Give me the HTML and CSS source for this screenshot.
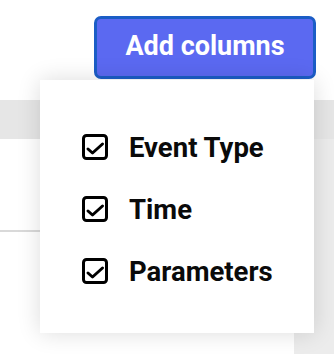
FILE: index.html
```html
<!DOCTYPE html>
<html lang="en">
<head>
  <meta charset="UTF-8">
  <title>Add columns</title>
  <link rel="stylesheet" href="styles.css">
</head>
<body>
  <div class="page">
    <!-- Toolbar -->
    <div class="toolbar">
      <button class="add-btn">Add columns</button>
    </div>

    <!-- Table behind the menu -->
    <div class="table">
      <div class="table-head"></div>
      <div class="cell"></div>
      <div class="cell side"></div>
      <div class="cell rest"></div>
      <div class="cell side"></div>
    </div>

    <!-- Column picker -->
    <div class="menu">
      <label class="menu-item">
        <svg class="check" width="26" height="26" viewBox="0 0 26 26">
          <rect x="1.5" y="1.5" width="23" height="23" rx="3" fill="none" stroke="#000" stroke-width="3"/>
          <path d="M6 15 L10.5 19 L20.5 10" fill="none" stroke="#000" stroke-width="3" stroke-linecap="round" stroke-linejoin="round"/>
        </svg>
        <span>Event Type</span>
      </label>
      <label class="menu-item">
        <svg class="check" width="26" height="26" viewBox="0 0 26 26">
          <rect x="1.5" y="1.5" width="23" height="23" rx="3" fill="none" stroke="#000" stroke-width="3"/>
          <path d="M6 15 L10.5 19 L20.5 10" fill="none" stroke="#000" stroke-width="3" stroke-linecap="round" stroke-linejoin="round"/>
        </svg>
        <span>Time</span>
      </label>
      <label class="menu-item">
        <svg class="check" width="26" height="26" viewBox="0 0 26 26">
          <rect x="1.5" y="1.5" width="23" height="23" rx="3" fill="none" stroke="#000" stroke-width="3"/>
          <path d="M6 15 L10.5 19 L20.5 10" fill="none" stroke="#000" stroke-width="3" stroke-linecap="round" stroke-linejoin="round"/>
        </svg>
        <span>Parameters</span>
      </label>
    </div>
  </div>
</body>
</html>
```

FILE: styles.css
```css
* {
  margin: 0;
  padding: 0;
  box-sizing: border-box;
}

body {
  background-color: #fff;
  font-family: Roboto, "Liberation Sans", sans-serif;
}

.page {
  position: relative;
  width: 334px;
  height: 354px;
  display: flex;
  flex-direction: column;
  overflow: hidden;
}

/* Toolbar */
.toolbar {
  height: 100px;
  display: flex;
  justify-content: flex-end;
  align-items: flex-start;
  padding: 16px 18px 0 0;
}

.add-btn {
  width: 222px;
  height: 63px;
  background-color: #5b69f1;
  border: 3px solid #1b5dc6;
  border-radius: 7px;
  color: #fff;
  font-family: inherit;
  font-size: 27px;
  font-weight: 700;
  padding-bottom: 3px;
}

/* Table */
.table {
  flex: 1;
  display: grid;
  grid-template-columns: 1fr 40px;
  grid-template-rows: 39px 93px 1fr;
}

.table-head {
  grid-column: 1 / 3;
  background-color: #e6e6e6;
}

.cell {
  border-bottom: 2px solid #d9d9d9;
}

.cell.rest {
  border-bottom: none;
}

.cell.side {
  background-color: #ececec;
  border-bottom: none;
}

/* Column picker menu */
.menu {
  position: absolute;
  top: 80px;
  left: 40px;
  width: 274px;
  height: 253px;
  background-color: #fff;
  box-shadow: 0 0 22px rgba(0, 0, 0, 0.14);
  display: flex;
  flex-direction: column;
  gap: 36px;
  padding: 54px 0 0 42px;
}

.menu-item {
  display: flex;
  align-items: center;
  gap: 21px;
  height: 26px;
  font-size: 27.5px;
  font-weight: 700;
  color: #0a0a0a;
}

.check {
  flex-shrink: 0;
}
```
